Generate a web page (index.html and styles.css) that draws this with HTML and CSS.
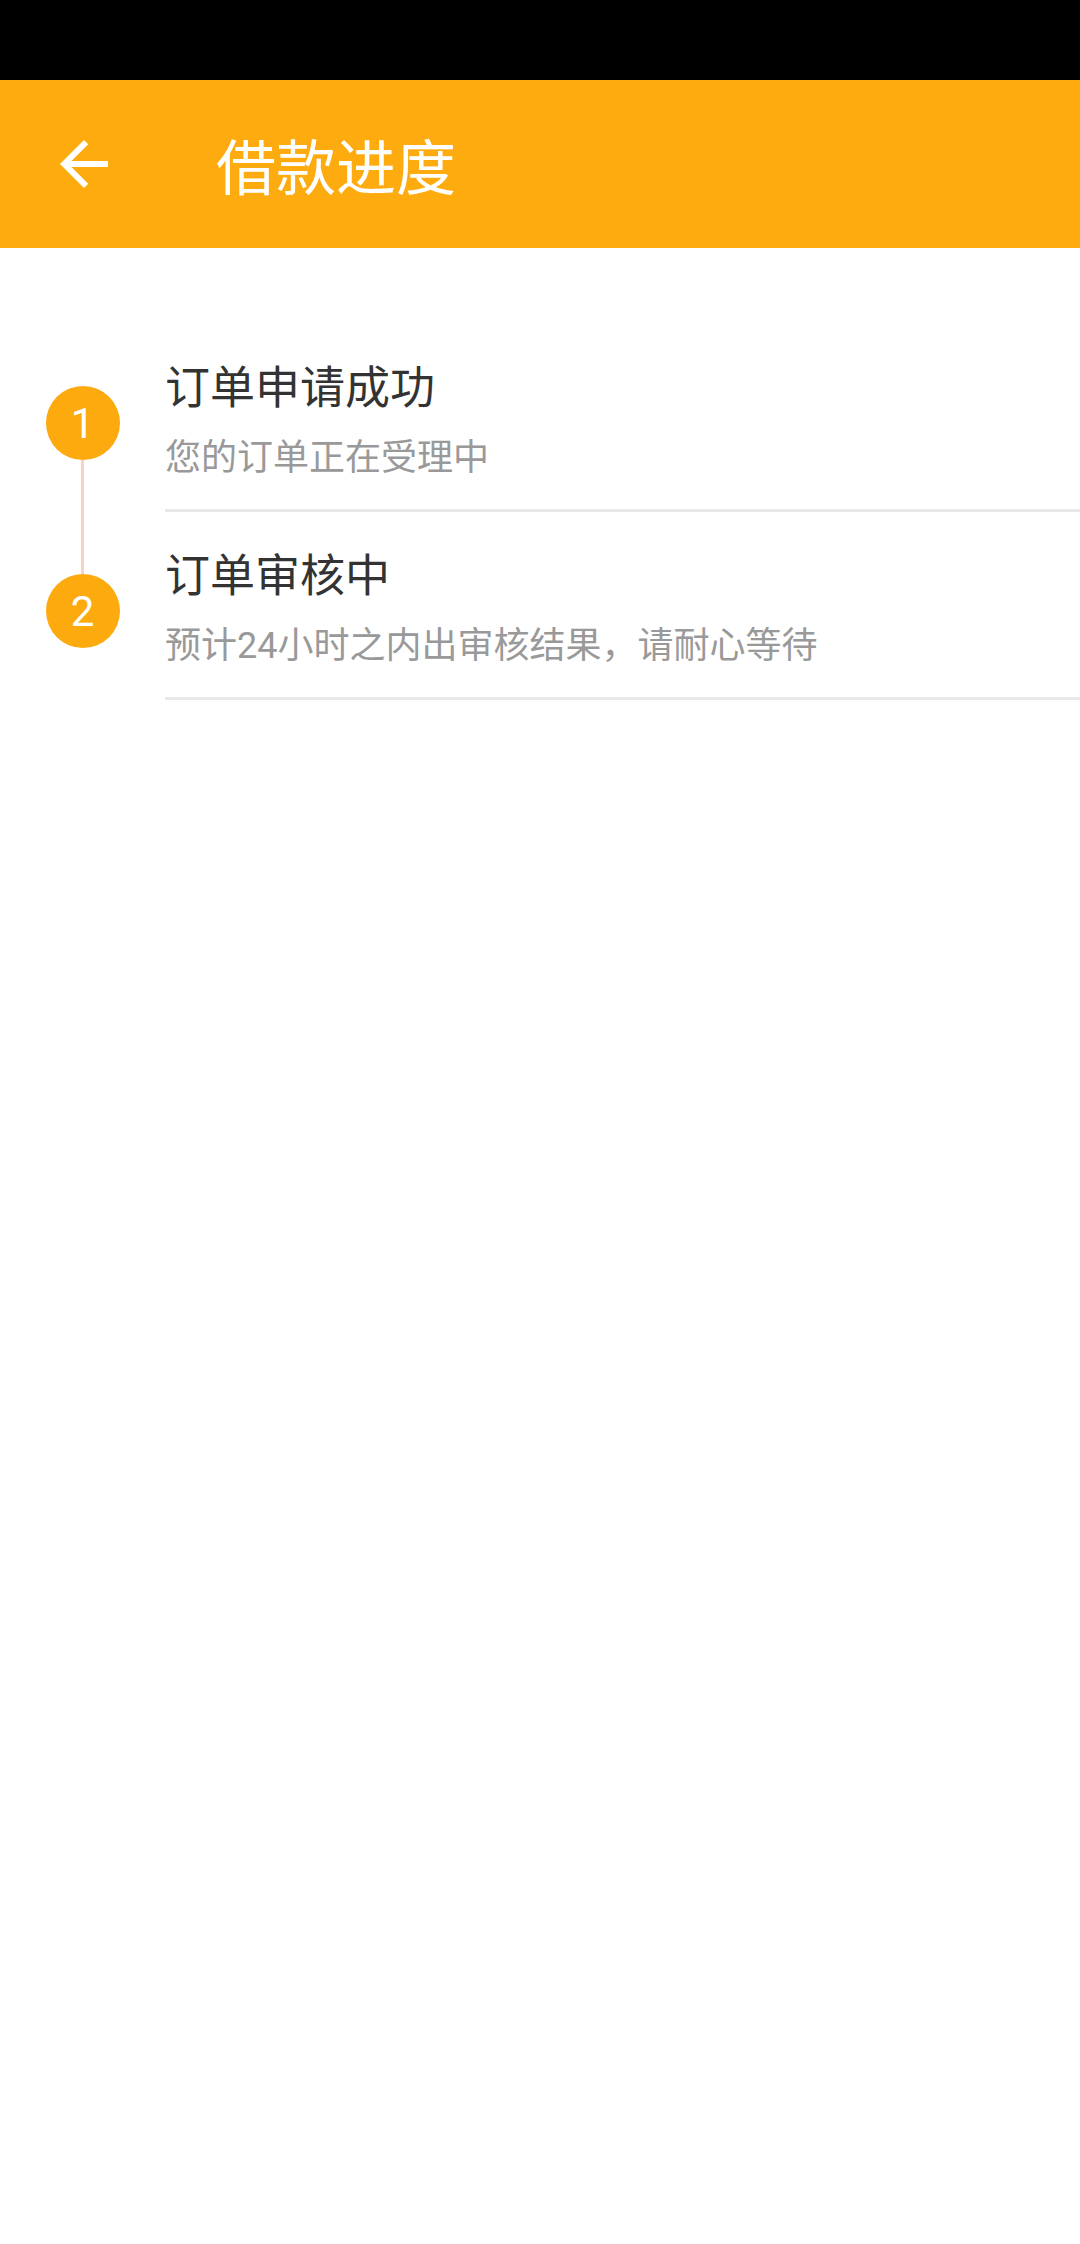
FILE: index.html
```html
<!DOCTYPE html>
<html lang="zh-CN">
<head>
    <meta charset="UTF-8">
    <meta name="viewport" content="width=device-width, initial-scale=1.0">
    <title>借款进度</title>
    <link rel="stylesheet" href="styles.css">
</head>
<body>
    <div class="status-bar"></div>
    <div class="toolbar">
        <button class="back-btn" aria-label="返回">
            <svg viewBox="0 0 24 24" width="72" height="72">
                <path d="M20 11H7.83l5.59-5.59L12 4l-8 8 8 8 1.41-1.41L7.83 13H20v-2z" fill="#fff"/>
            </svg>
        </button>
        <h1 class="toolbar-title">借款进度</h1>
    </div>

    <div class="steps">
        <div class="step first">
            <div class="marker">
                <div class="line-top"></div>
                <div class="circle">1</div>
                <div class="line-bottom"></div>
            </div>
            <div class="step-body">
                <div class="step-title">订单申请成功</div>
                <div class="step-desc">您的订单正在受理中</div>
            </div>
        </div>
        <div class="step last">
            <div class="marker">
                <div class="line-top"></div>
                <div class="circle">2</div>
                <div class="line-bottom"></div>
            </div>
            <div class="step-body">
                <div class="step-title">订单审核中</div>
                <div class="step-desc">预计24小时之内出审核结果，请耐心等待</div>
            </div>
        </div>
    </div>
</body>
</html>
```

FILE: styles.css
```css
* {
    box-sizing: border-box;
    margin: 0;
    padding: 0;
}

body {
    background-color: #fff;
    font-family: Roboto, "Noto Sans CJK SC", sans-serif;
    width: 1080px;
    min-height: 2244px;
}

.status-bar {
    height: 80px;
    background-color: #000;
}

.toolbar {
    display: flex;
    align-items: center;
    height: 168px;
    background-color: #feab0f;
}

.back-btn {
    display: flex;
    width: 72px;
    height: 72px;
    margin-left: 48px;
    background: none;
    border: none;
}

.toolbar-title {
    margin-left: 96px;
    margin-top: 12px;
    color: #fff;
    font-size: 60px;
    font-weight: 400;
    line-height: 80px;
}

.steps {
    padding-top: 76px;
}

.step {
    display: flex;
}

.marker {
    display: flex;
    flex-direction: column;
    align-items: center;
    width: 165px;
}

.line-top {
    width: 3px;
    height: 62px;
    flex-shrink: 0;
}

.line-bottom {
    width: 3px;
    flex: 1;
}

.step:not(.first) .line-top,
.step:not(.last) .line-bottom {
    background-color: #f9d2c4;
}

.circle {
    display: flex;
    justify-content: center;
    align-items: center;
    width: 74px;
    height: 74px;
    border-radius: 50%;
    background-color: #fdaa0e;
    color: #fff;
    font-size: 42px;
    flex-shrink: 0;
}

.step-body {
    flex: 1;
    height: 188px;
    padding-top: 35px;
    border-bottom: 3px solid #e8e8e8;
}

.step-title {
    color: #333;
    font-size: 45px;
    line-height: 60px;
}

.step-desc {
    margin-top: 15px;
    color: #999;
    font-size: 36px;
    line-height: 48px;
}
```
